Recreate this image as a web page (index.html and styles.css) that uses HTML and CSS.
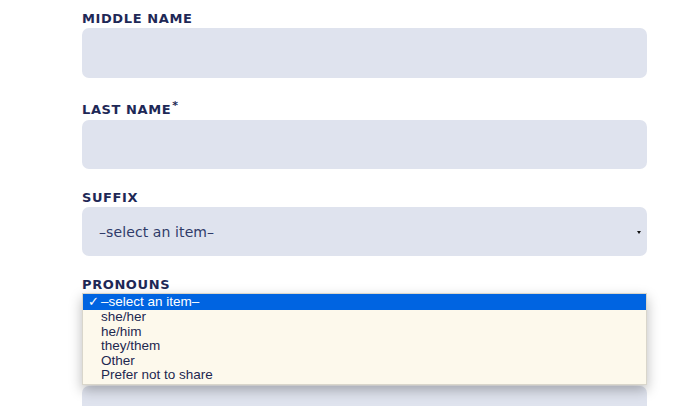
FILE: index.html
```html
<!DOCTYPE html>
<html lang="en">
<head>
<meta charset="utf-8">
<title>Form</title>
<link rel="stylesheet" href="styles.css">
</head>
<body>
<form class="form">
  <div class="field field--first">
    <label class="label">MIDDLE NAME</label>
    <div class="input input--tall"></div>
  </div>
  <div class="field">
    <label class="label">LAST NAME<span class="req">*</span></label>
    <div class="input"></div>
  </div>
  <div class="field">
    <label class="label">SUFFIX</label>
    <div class="input select">
      <span class="select-text">–select an item–</span>
      <span class="caret"></span>
    </div>
  </div>
  <div class="field field--open">
    <label class="label">PRONOUNS</label>
    <div class="input select">
      <span class="select-text">–select an item–</span>
      <span class="caret"></span>
    </div>
    <ul class="menu">
      <li class="menu-item menu-item--active"><span class="check">✓</span>–select an item–</li>
      <li class="menu-item">she/her</li>
      <li class="menu-item">he/him</li>
      <li class="menu-item">they/them</li>
      <li class="menu-item">Other</li>
      <li class="menu-item">Prefer not to share</li>
    </ul>
  </div>
  <div class="field">
    <div class="input select"></div>
  </div>
</form>
</body>
</html>
```
FILE: styles.css
```css
html, body {
  margin: 0;
  padding: 0;
  background: #ffffff;
  overflow: hidden;
}
body {
  width: 696px;
  height: 406px;
  font-family: "DejaVu Sans", sans-serif;
}
.form {
  width: 565px;
  margin-left: 82px;
  padding-top: 11px;
  display: flex;
  flex-direction: column;
}
.field {
  position: relative;
  display: flex;
  flex-direction: column;
  margin-bottom: 21px;
}
.field--first {
  margin-bottom: 24px;
}
.field--open {
  margin-bottom: 43px;
}
.label {
  font-family: "DejaVu Sans", sans-serif;
  font-weight: bold;
  font-size: 13px;
  line-height: 15px;
  letter-spacing: 0.6px;
  color: #1e2856;
  margin-bottom: 2px;
  white-space: nowrap;
}
.req {
  position: relative;
  top: -5px;
  font-size: 11px;
  margin-left: 1px;
}
.input {
  height: 49px;
  background: #dfe3ee;
  border-radius: 7px;
  box-sizing: border-box;
}
.input--tall {
  height: 50px;
}
.select {
  display: flex;
  align-items: center;
  justify-content: space-between;
  padding: 0 6px 0 17px;
}
.select-text {
  font-size: 14px;
  color: #2f3b69;
  letter-spacing: 0.1px;
}
.caret {
  width: 0;
  height: 0;
  border-left: 2.5px solid transparent;
  border-right: 2.5px solid transparent;
  border-top: 3px solid #111;
  margin-top: 1px;
}
.menu {
  position: absolute;
  top: 16px;
  left: 0;
  width: 565px;
  margin: 0;
  padding: 0 0 1px 0;
  list-style: none;
  background: #fdf9ec;
  border: 1px solid #d9d6cb;
  box-sizing: border-box;
  box-shadow: 0 5px 12px rgba(0, 0, 0, 0.28);
  z-index: 2;
}
.menu-item {
  font-family: "Liberation Sans", Arial, sans-serif;
  font-size: 13.5px;
  line-height: 14.6px;
  color: #1d2850;
  padding-left: 18px;
  white-space: nowrap;
}
.menu-item--active {
  background: #0064e1;
  color: #ffffff;
  padding-left: 5px;
  line-height: 16px;
}
.check {
  display: inline-block;
  width: 13px;
  font-family: "DejaVu Sans", sans-serif;
  font-size: 13px;
  font-weight: bold;
}
```
